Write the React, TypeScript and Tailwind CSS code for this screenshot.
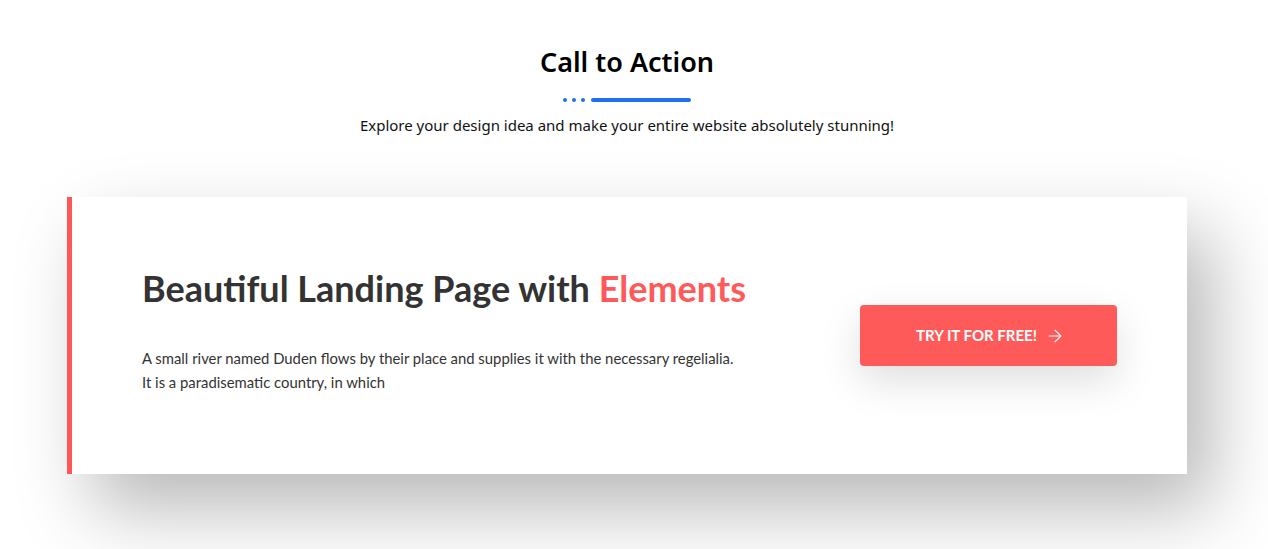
import React from "react";
import { ArrowRight } from "lucide-react";

export default function App() {
  return (
    <div className="w-[1268px] h-[549px] bg-white overflow-hidden">
      <div className="w-[1254px] flex flex-col items-center">
        <h2
          className="mt-[44px] text-[27px] leading-[36px] font-semibold text-black"
          style={{ fontFamily: '"Noto Sans", "Open Sans", sans-serif' }}
        >
          Call to Action
        </h2>
        <div className="mt-[18px] flex items-center gap-[5px]">
          <span className="w-[4px] h-[4px] rounded-full bg-[#1f6ff0]" />
          <span className="w-[4px] h-[4px] rounded-full bg-[#1f6ff0]" />
          <span className="w-[4px] h-[4px] rounded-full bg-[#1f6ff0]" />
          <span className="ml-[1px] w-[100px] h-[4px] rounded-full bg-[#1f6ff0]" />
        </div>
        <p
          className="mt-[12px] text-[15px] leading-[22px] text-[#111]"
          style={{ fontFamily: '"Noto Sans", "Open Sans", sans-serif' }}
        >
          Explore your design idea and make your entire website absolutely stunning!
        </p>
        <div
          className="mt-[61px] w-[1120px] h-[277px] bg-white border-l-[5px] border-[#ff5757] shadow-[25px_35px_70px_rgba(0,0,0,0.28)] flex items-center justify-between pl-[70px] pr-[70px]"
          style={{ fontFamily: 'Lato, "Noto Sans", sans-serif' }}
        >
          <div className="flex flex-col mb-[12px]">
            <h3 className="text-[36px] leading-[44px] font-bold text-[#333]">
              Beautiful Landing Page with <span className="text-[#ff5a5a]">Elements</span>
            </h3>
            <p className="mt-[36px] text-[14.85px] leading-[24px] text-[#333]">
              A small river named Duden flows by their place and supplies it with the necessary regelialia.
              <br />
              It is a paradisematic country, in which
            </p>
          </div>
          <button className="w-[257px] h-[61px] rounded-[4px] bg-[#ff5a5a] text-white text-[15px] font-bold uppercase flex items-center justify-center gap-[8px] pl-[4px] shadow-[0_15px_40px_rgba(0,0,0,0.13)]">
            <span>Try it for free!</span>
            <ArrowRight size={20} strokeWidth={1.4} />
          </button>
        </div>
      </div>
    </div>
  );
}
